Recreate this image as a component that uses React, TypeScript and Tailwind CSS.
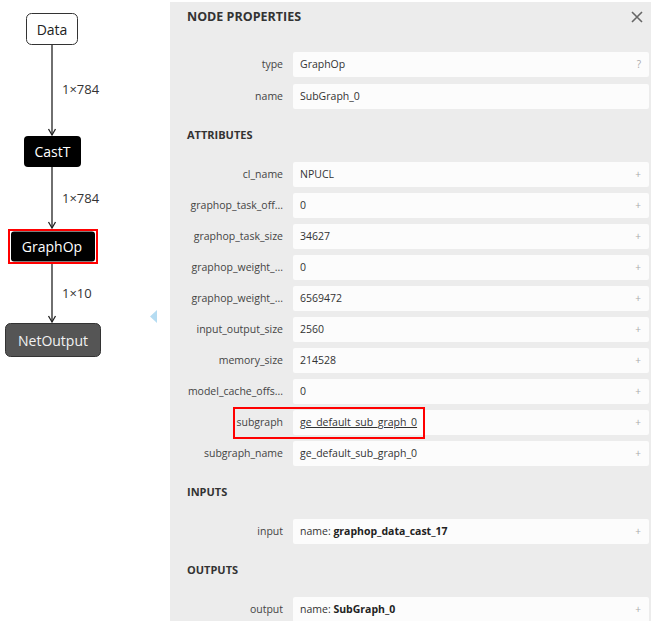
import React from 'react';

const font = { fontFamily: '"Open Sans", "Noto Sans", sans-serif' };

type Row = { label: string; value: React.ReactNode; icon?: string; highlight?: boolean };

function Graph() {
  const arrow = (x: number, y: number) => (
    <polyline points={`${x - 3.5},${y - 6} ${x},${y} ${x + 3.5},${y - 6}`} fill="none" stroke="#222" strokeWidth="1.3" />
  );
  return (
    <svg width="170" height="621" viewBox="0 0 170 621" className="block" style={font}>
      <line x1="52" y1="45" x2="52" y2="135" stroke="#222" strokeWidth="1.3" />
      {arrow(52, 135)}
      <text x="62" y="94" fontSize="13" fill="#333">1×784</text>
      <rect x="26.5" y="13.5" width="51" height="31" rx="5" fill="#fff" stroke="#333" />
      <text x="52" y="35" fontSize="14" fill="#222" textAnchor="middle">Data</text>

      <line x1="52" y1="167" x2="52" y2="228" stroke="#222" strokeWidth="1.3" />
      {arrow(52, 228)}
      <text x="62" y="203" fontSize="13" fill="#333">1×784</text>
      <rect x="24" y="136" width="57" height="31" rx="4" fill="#000" />
      <text x="52.5" y="157" fontSize="14" fill="#fff" textAnchor="middle">CastT</text>

      <line x1="52" y1="264" x2="52" y2="322" stroke="#222" strokeWidth="1.3" />
      {arrow(52, 322)}
      <text x="62" y="298" fontSize="13" fill="#333">1×10</text>
      <rect x="9" y="230" width="88" height="33" fill="none" stroke="#f00" strokeWidth="2" />
      <rect x="11" y="231.5" width="84" height="30" rx="3" fill="#000" />
      <text x="52" y="252" fontSize="14" fill="#fff" textAnchor="middle">GraphOp</text>

      <rect x="5.5" y="323.5" width="95" height="33" rx="5" fill="#555" stroke="#333" />
      <text x="53" y="346" fontSize="14" fill="#f2f2f2" textAnchor="middle">NetOutput</text>

      <polygon points="157,310 157,323 150,316.5" fill="#b5dcf2" />
    </svg>
  );
}

function PropRow({ label, value, icon = '+', highlight }: Row) {
  return (
    <div className="relative flex h-[25px] items-center">
      <div className="w-[96px] shrink-0 whitespace-nowrap text-right text-[10.5px] text-[#444]">{label}</div>
      <div className="ml-[10px] flex h-full flex-1 items-center justify-between rounded-[2px] bg-[#fcfcfc] pl-[7px] pr-[8px] text-[10.5px] text-[#333]">
        <span className="whitespace-nowrap">{value}</span>
        <span className="text-[10px] text-[#aaa]">{icon}</span>
      </div>
      {highlight && (
        <div className="pointer-events-none absolute left-[46px] top-[-3.5px] h-[32px] w-[192px] border-2 border-[#f00]" />
      )}
    </div>
  );
}

function Section({ title }: { title: string }) {
  return (
    <div className="flex h-[53px] items-center text-[11px] font-bold text-[#333]">{title}</div>
  );
}

export default function App() {
  const attrs: Row[] = [
    { label: 'cl_name', value: 'NPUCL' },
    { label: 'graphop_task_off...', value: '0' },
    { label: 'graphop_task_size', value: '34627' },
    { label: 'graphop_weight_...', value: '0' },
    { label: 'graphop_weight_...', value: '6569472' },
    { label: 'input_output_size', value: '2560' },
    { label: 'memory_size', value: '214528' },
    { label: 'model_cache_offs...', value: '0' },
    { label: 'subgraph', value: <span className="underline">ge_default_sub_graph_0</span>, highlight: true },
    { label: 'subgraph_name', value: 'ge_default_sub_graph_0' },
  ];

  return (
    <div className="flex h-[621px] w-[651px] overflow-hidden bg-white" style={font}>
      <div className="w-[170px] shrink-0">
        <Graph />
      </div>
      <div className="mt-[2px] flex-1 bg-[#ececec] pl-[17px] pr-[2px]">
        <div className="flex h-[30px] items-center justify-between">
          <span className="text-[12.5px] font-bold text-[#333]">NODE PROPERTIES</span>
          <svg width="12" height="12" viewBox="0 0 12 12" className="mr-[6px]">
            <path d="M1 1 L11 11 M11 1 L1 11" stroke="#666" strokeWidth="1.6" />
          </svg>
        </div>
        <div className="mt-[20px] flex flex-col gap-[7px]">
          <PropRow label="type" value="GraphOp" icon="?" />
          <PropRow label="name" value="SubGraph_0" icon="" />
        </div>
        <Section title="ATTRIBUTES" />
        <div className="flex flex-col gap-[6px]">
          {attrs.map((r, i) => (
            <PropRow key={i} {...r} />
          ))}
        </div>
        <Section title="INPUTS" />
        <PropRow
          label="input"
          value={<>name: <b className="font-bold text-[#222]">graphop_data_cast_17</b></>}
        />
        <Section title="OUTPUTS" />
        <PropRow label="output" value={<>name: <b className="font-bold text-[#222]">SubGraph_0</b></>} />
      </div>
    </div>
  );
}
